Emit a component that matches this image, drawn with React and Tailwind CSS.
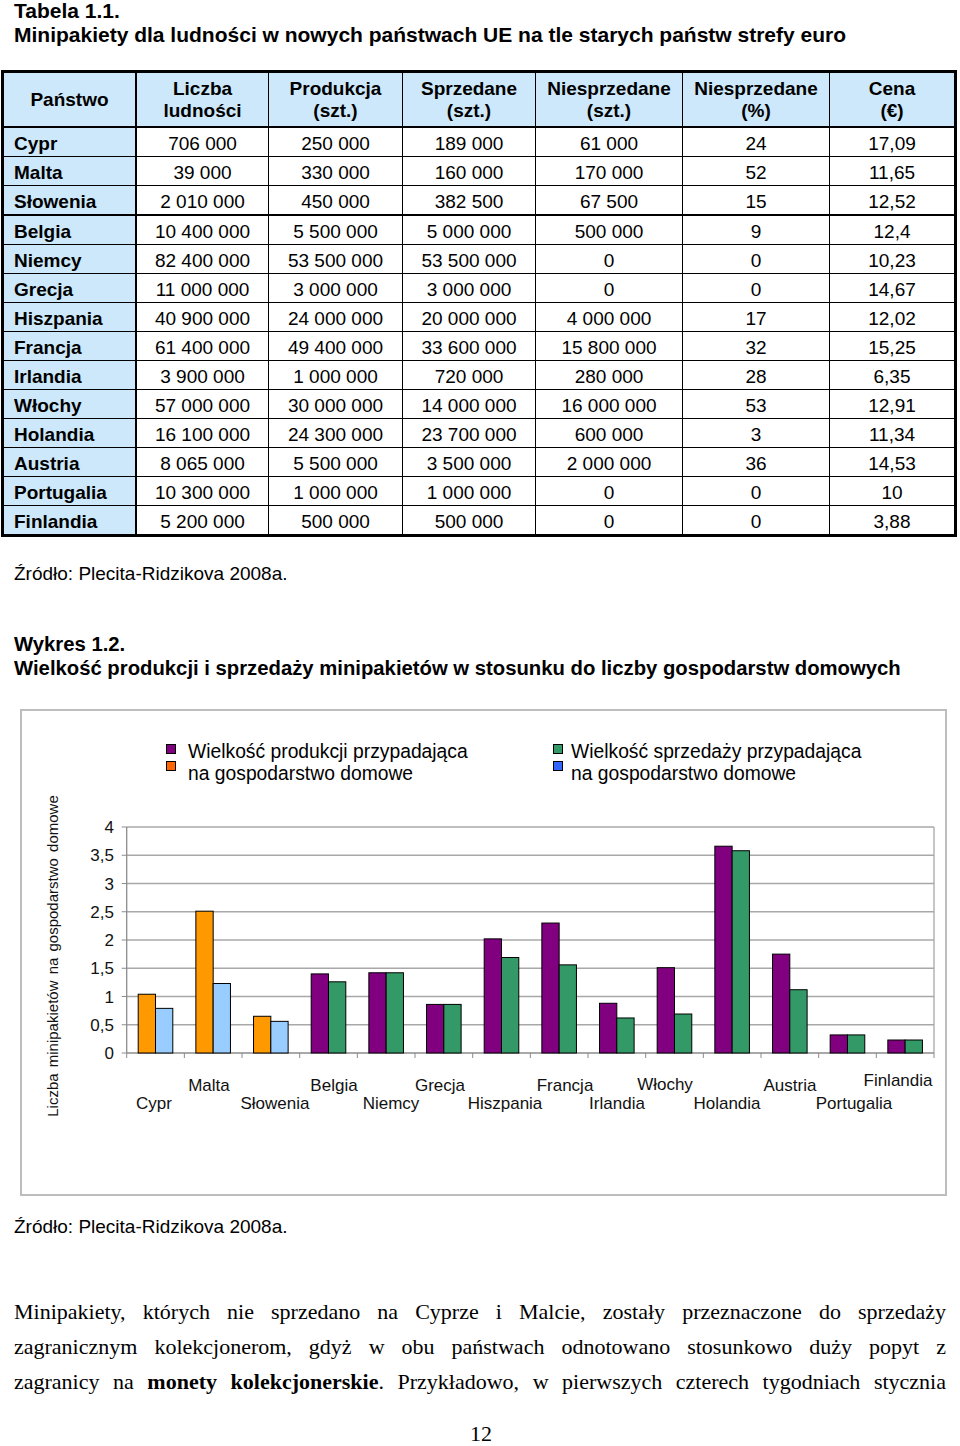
import React from 'react';

const rows = [
  ['Cypr', '706 000', '250 000', '189 000', '61 000', '24', '17,09'],
  ['Malta', '39 000', '330 000', '160 000', '170 000', '52', '11,65'],
  ['Słowenia', '2 010 000', '450 000', '382 500', '67 500', '15', '12,52'],
  ['Belgia', '10 400 000', '5 500 000', '5 000 000', '500 000', '9', '12,4'],
  ['Niemcy', '82 400 000', '53 500 000', '53 500 000', '0', '0', '10,23'],
  ['Grecja', '11 000 000', '3 000 000', '3 000 000', '0', '0', '14,67'],
  ['Hiszpania', '40 900 000', '24 000 000', '20 000 000', '4 000 000', '17', '12,02'],
  ['Francja', '61 400 000', '49 400 000', '33 600 000', '15 800 000', '32', '15,25'],
  ['Irlandia', '3 900 000', '1 000 000', '720 000', '280 000', '28', '6,35'],
  ['Włochy', '57 000 000', '30 000 000', '14 000 000', '16 000 000', '53', '12,91'],
  ['Holandia', '16 100 000', '24 300 000', '23 700 000', '600 000', '3', '11,34'],
  ['Austria', '8 065 000', '5 500 000', '3 500 000', '2 000 000', '36', '14,53'],
  ['Portugalia', '10 300 000', '1 000 000', '1 000 000', '0', '0', '10'],
  ['Finlandia', '5 200 000', '500 000', '500 000', '0', '0', '3,88'],
];

const widths = ['w-[133px]', 'w-[132px]', 'w-[134px]', 'w-[133px]', 'w-[147px]', 'w-[147px]', 'w-[124px]'];

const headers = [
  ['Państwo'],
  ['Liczba', 'ludności'],
  ['Produkcja', '(szt.)'],
  ['Sprzedane', '(szt.)'],
  ['Niesprzedane', '(szt.)'],
  ['Niesprzedane', '(%)'],
  ['Cena', '(€)'],
];

// chart data: [label, first bar, second bar, label centre x, label centre y]
const chart = [
  ['Cypr', 1.04, 0.79, 154, 1104],
  ['Malta', 2.51, 1.23, 209, 1086],
  ['Słowenia', 0.65, 0.56, 275, 1104],
  ['Belgia', 1.4, 1.26, 334, 1086],
  ['Niemcy', 1.42, 1.42, 391, 1104],
  ['Grecja', 0.86, 0.86, 440, 1086],
  ['Hiszpania', 2.02, 1.69, 505, 1104],
  ['Francja', 2.3, 1.56, 565, 1086],
  ['Irlandia', 0.88, 0.62, 617, 1104],
  ['Włochy', 1.51, 0.69, 665, 1085],
  ['Holandia', 3.66, 3.58, 727, 1104],
  ['Austria', 1.75, 1.12, 790, 1086],
  ['Portugalia', 0.32, 0.32, 854, 1104],
  ['Finlandia', 0.23, 0.23, 898, 1081],
];

const X0 = 126.7;
const X1 = 934;
const Y0 = 1054;
const STEP = (X1 - X0) / 14;
const UNIT = (Y0 - 828) / 4;

const Chart = () => {
  const ticks = [0, 0.5, 1, 1.5, 2, 2.5, 3, 3.5, 4];
  return (
    <svg width="923" height="409" className="block">
      <g transform="translate(-22,-786)" fontFamily="'Liberation Sans', Arial, sans-serif">
        {/* grid */}
        {ticks.slice(1).map((t) => (
          <line key={t} x1={X0} x2={X1} y1={Y0 - t * UNIT} y2={Y0 - t * UNIT} stroke="#a8a8a8" strokeWidth="1.3" />
        ))}
        <line x1={X1} x2={X1} y1={828} y2={Y0} stroke="#a8a8a8" strokeWidth="1.3" />
        {/* axes */}
        <line x1={X0} x2={X0} y1={828} y2={Y0} stroke="#8c8c8c" strokeWidth="1.3" />
        <line x1={X0} x2={X1} y1={Y0} y2={Y0} stroke="#8c8c8c" strokeWidth="1.3" />
        {ticks.map((t) => (
          <g key={'t' + t}>
            <line x1={X0 - 5} x2={X0} y1={Y0 - t * UNIT} y2={Y0 - t * UNIT} stroke="#8c8c8c" />
            <text x={114} y={Y0 - t * UNIT + 6} fontSize="17" textAnchor="end" fill="#111">
              {String(t).replace('.', ',')}
            </text>
          </g>
        ))}
        {Array.from({ length: 15 }).map((_, i) => (
          <line key={'x' + i} x1={X0 + i * STEP} x2={X0 + i * STEP} y1={Y0} y2={Y0 + 5} stroke="#8c8c8c" />
        ))}
        {/* bars */}
        {chart.map(([name, a, b, lx, ly], i) => {
          const gx = X0 + i * STEP;
          const c1 = i < 3 ? '#ff9900' : '#800080';
          const c2 = i < 3 ? '#99ccff' : '#339966';
          return (
            <g key={name}>
              <rect x={gx + 11.5} y={Y0 - a * UNIT} width={17.3} height={a * UNIT} fill={c1} stroke="#000" strokeWidth="1" />
              <rect x={gx + 28.8} y={Y0 - b * UNIT} width={17.3} height={b * UNIT} fill={c2} stroke="#000" strokeWidth="1" />
              <text x={lx} y={ly + 6} fontSize="17" textAnchor="middle" fill="#111">
                {name}
              </text>
            </g>
          );
        })}
        <text transform="translate(58,957) rotate(-90)" fontSize="15" textAnchor="middle" wordSpacing="2" fill="#111">
          Liczba minipakietów na gospodarstwo domowe
        </text>
      </g>
    </svg>
  );
};

const Swatch = ({ color }) => <div className={`w-[10px] h-[10px] border border-black ${color}`} />;

export default function App() {
  return (
    <div className="w-[960px] h-[1446px] bg-white overflow-hidden text-black font-['Liberation_Sans',Arial,sans-serif]">
      {/* Table title */}
      <div className="pl-[14px] font-bold text-[21px]">
        <div className="leading-[22px]">Tabela 1.1.</div>
        <div className="leading-[26px]">Minipakiety dla ludności w nowych państwach UE na tle starych państw strefy euro</div>
      </div>

      {/* Table */}
      <div className="ml-[1px] mt-[22px] w-[956px] border-[3px] border-black text-[19px]">
        <div className="flex h-[55px] border-b-2 border-black bg-[#cce8fa] font-bold leading-[22px]">
          {headers.map((h, i) => (
            <div
              key={i}
              className={`${widths[i]} flex flex-col items-center justify-center text-center ${
                i === 0 ? 'border-r-2' : i < 6 ? 'border-r' : ''
              } border-black`}
            >
              {h.map((l) => (
                <div key={l}>{l}</div>
              ))}
            </div>
          ))}
        </div>
        {rows.map((r, ri) => (
          <div
            key={r[0]}
            className={`flex leading-[32px] ${
              ri === 2 ? 'h-[30px] border-b-2' : ri === rows.length - 1 ? 'h-[28px]' : 'h-[29px] border-b'
            } border-black`}
          >
            {r.map((c, ci) => (
              <div
                key={ci}
                className={`${widths[ci]} h-full ${
                  ci === 0 ? 'bg-[#cce8fa] font-bold pl-[10px] border-r-2' : ci < 6 ? 'text-center border-r' : 'text-center'
                } border-black`}
              >
                {c}
              </div>
            ))}
          </div>
        ))}
      </div>

      <div className="pl-[14px] mt-[26px] text-[19px] leading-[22px]">Źródło: Plecita-Ridzikova 2008a.</div>

      {/* Chart title */}
      <div className="pl-[14px] mt-[47px] font-bold text-[20.3px] leading-[24px]">
        <div>Wykres 1.2.</div>
        <div>Wielkość produkcji i sprzedaży minipakietów w stosunku do liczby gospodarstw domowych</div>
      </div>

      {/* Chart frame */}
      <div className="ml-[20px] mt-[29px] w-[927px] h-[487px] border-2 border-[#bdbdbd]">
        <div className="flex pt-[30px] pl-[144px] text-[19.3px] leading-[22px]">
          <div className="flex w-[387px]">
            <div className="flex flex-col gap-[7px] pt-[3px]">
              <Swatch color="bg-[#800080]" />
              <Swatch color="bg-[#ff6600]" />
            </div>
            <div className="ml-[12px]">
              <div>Wielkość produkcji przypadająca</div>
              <div>na gospodarstwo domowe</div>
            </div>
          </div>
          <div className="flex">
            <div className="flex flex-col gap-[7px] pt-[3px]">
              <Swatch color="bg-[#339966]" />
              <Swatch color="bg-[#3366ff]" />
            </div>
            <div className="ml-[8px]">
              <div>Wielkość sprzedaży przypadająca</div>
              <div>na gospodarstwo domowe</div>
            </div>
          </div>
        </div>
        <Chart />
      </div>

      <div className="pl-[14px] mt-[20px] text-[19px] leading-[22px]">Źródło: Plecita-Ridzikova 2008a.</div>

      {/* Body text */}
      <div className="px-[14px] mt-[56px] font-['Liberation_Serif','Times_New_Roman',serif] text-[22px] leading-[35px]">
        <div className="whitespace-nowrap text-justify [text-align-last:justify]">
          Minipakiety, których nie sprzedano na Cyprze i Malcie, zostały przeznaczone do sprzedaży
        </div>
        <div className="whitespace-nowrap text-justify [text-align-last:justify]">
          zagranicznym kolekcjonerom, gdyż w obu państwach odnotowano stosunkowo duży popyt z
        </div>
        <div className="whitespace-nowrap text-justify [text-align-last:justify]">
          zagranicy na <b>monety kolekcjonerskie</b>. Przykładowo, w pierwszych czterech tygodniach stycznia
        </div>
      </div>

      <div className="mt-[24px] text-center pl-[2px] font-['Liberation_Serif','Times_New_Roman',serif] text-[22px] leading-[22px]">
        12
      </div>
    </div>
  );
}
